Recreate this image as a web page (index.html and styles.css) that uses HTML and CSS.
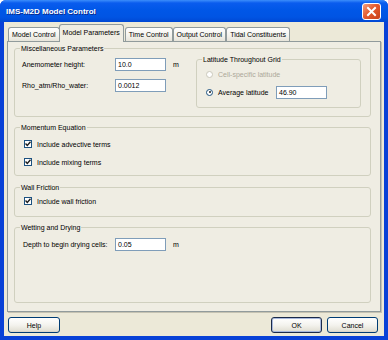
FILE: index.html
```html
<!DOCTYPE html>
<html lang="en">
<head>
    <meta charset="UTF-8">
    <title>IMS-M2D Model Control</title>
    <link rel="stylesheet" href="styles.css">
</head>
<body>
    <div class="window">
        <div class="titlebar">
            <span class="title">IMS-M2D Model Control</span>
            <span class="close">
                <svg width="11" height="11" viewBox="0 0 11 11"><path d="M2 2 L9 9 M9 2 L2 9" stroke="#fff" stroke-width="2" stroke-linecap="square"/></svg>
            </span>
        </div>
        <div class="client">
            <!-- tab strip -->
            <div class="tabs">
                <span class="tab">Model Control</span>
                <span class="tab active">Model Parameters</span>
                <span class="tab">Time Control</span>
                <span class="tab">Output Control</span>
                <span class="tab">Tidal Constituents</span>
            </div>
            <div class="panel">
                <div class="group misc">
                    <span class="group-title">Miscellaneous Parameters</span>
                    <div class="misc-body">
                        <div class="fields">
                            <div class="row">
                                <label>Anemometer height:</label>
                                <span class="input">10.0</span>
                                <span class="unit">m</span>
                            </div>
                            <div class="row">
                                <label>Rho_atm/Rho_water:</label>
                                <span class="input">0.0012</span>
                            </div>
                        </div>
                        <div class="group lat">
                            <span class="group-title">Latitude Throughout Grid</span>
                            <div class="radio-row disabled">
                                <span class="radio"></span>
                                <span>Cell-specific latitude</span>
                            </div>
                            <div class="radio-row">
                                <span class="radio checked"></span>
                                <span class="radio-label">Average latitude</span>
                                <span class="input">46.90</span>
                            </div>
                        </div>
                    </div>
                </div>

                <div class="group momentum">
                    <span class="group-title">Momentum Equation</span>
                    <div class="check-row">
                        <span class="check"><svg width="6" height="6" viewBox="0 0 6 6"><path d="M0.5 2.5 L2.3 4.5 L5.5 0.8" fill="none" stroke="#1d1d1d" stroke-width="1.4"/></svg></span>
                        <span>Include advective terms</span>
                    </div>
                    <div class="check-row">
                        <span class="check"><svg width="6" height="6" viewBox="0 0 6 6"><path d="M0.5 2.5 L2.3 4.5 L5.5 0.8" fill="none" stroke="#1d1d1d" stroke-width="1.4"/></svg></span>
                        <span>Include mixing terms</span>
                    </div>
                </div>

                <div class="group wall">
                    <span class="group-title">Wall Friction</span>
                    <div class="check-row">
                        <span class="check"><svg width="6" height="6" viewBox="0 0 6 6"><path d="M0.5 2.5 L2.3 4.5 L5.5 0.8" fill="none" stroke="#1d1d1d" stroke-width="1.4"/></svg></span>
                        <span>Include wall friction</span>
                    </div>
                </div>

                <div class="group wetting">
                    <span class="group-title">Wetting and Drying</span>
                    <div class="row">
                        <label>Depth to begin drying cells:</label>
                        <span class="input">0.05</span>
                        <span class="unit">m</span>
                    </div>
                </div>
            </div>
            <div class="buttons">
                <button class="btn help">Help</button>
                <span class="spacer"></span>
                <button class="btn default">OK</button>
                <button class="btn">Cancel</button>
            </div>
        </div>
    </div>
</body>
</html>
```

FILE: styles.css
```css
body { margin: 0; font-family: "Liberation Sans", Arial, sans-serif; font-size: 7px; color: #000; }

.window { width: 388px; height: 340px; display: flex; flex-direction: column; background: #0841D7; border-radius: 6px 6px 0 0; overflow: hidden; }

/* title bar */
.titlebar { height: 22px; flex: none; display: flex; align-items: center; padding: 0 7px 0 6px; background: linear-gradient(#3C8EFB 0, #0A5CEE 3px, #0057E7 10px, #0054E3 17px, #0048D3 22px); }
.title { color: #fff; font-weight: bold; font-size: 8px; text-shadow: 1px 1px 0 #0C2C8C; }
.close { margin-left: auto; width: 17px; height: 15px; border: 1px solid #fff; border-radius: 3px; display: flex; align-items: center; justify-content: center; background: linear-gradient(135deg, #F3A080 0, #E55B2E 45%, #C8401A 100%); }

.client { width: 380px; height: 314px; box-sizing: border-box; margin: 0 4px; background: #ECE9D8; display: flex; flex-direction: column; padding: 2px 3px 3px; }

/* tabs */
.tabs { display: flex; align-items: flex-end; height: 17px; margin-left: 1px; position: relative; z-index: 1; }
.tab { height: 14px; box-sizing: border-box; padding: 0 3px; display: flex; align-items: center; border: 1px solid #919B9C; border-bottom: none; border-radius: 3px 3px 0 0; background: linear-gradient(#FFFFFF, #F3F2EC 60%, #E6E4DA); white-space: nowrap; }
.tab.active { height: 18px; margin: 0 1px -1px -1px; padding: 0 3px 2px; background: #EFEDE3; position: relative; }

.panel { width: 374px; height: 271px; box-sizing: border-box; border: 1px solid #919B9C; background: #EFEDE3; padding: 2px 0 0 6px; box-shadow: 1px 1px 0 #C5C2B2; }

/* group boxes: the title sits on the top border */
.group { --pad: 7px; width: 357px; box-sizing: border-box; border: 1px solid #D0D0BF; border-radius: 3px; padding: 0 var(--pad); }
.group-title { display: block; width: max-content; margin: -5px 0 0 calc(5px - var(--pad)); padding: 0 1px; line-height: 9px; background: #EFEDE3; }

.misc { margin-top: 4px; padding-bottom: 8px; }
.misc-body { display: flex; align-items: flex-start; }
.fields { width: 174px; flex: none; padding-top: 5px; }
.row { display: flex; align-items: center; height: 13px; }
.row + .row { margin-top: 8px; }
.row label { width: 93px; flex: none; }
.input { width: 51px; height: 13px; box-sizing: border-box; flex: none; border: 1px solid #7F9DB9; background: #fff; padding: 0 2px; line-height: 11px; }
.unit { margin-left: 7px; }

.lat { --pad: 9px; width: 165px; flex: none; margin-top: 6px; padding-bottom: 9px; }
.radio-row { display: flex; align-items: center; height: 12px; }
.radio-row.disabled { color: #ACA899; margin-top: 4px; }
.radio-row + .radio-row { margin-top: 6px; }
.radio { width: 7px; height: 7px; border: 1px solid #1C5180; border-radius: 50%; background: #fff; margin-right: 5px; box-sizing: border-box; position: relative; }
.disabled .radio { border-color: #CAC8BB; }
.radio.checked::after { content: ""; position: absolute; left: 1.5px; top: 1.5px; width: 2px; height: 2px; border-radius: 50%; background: #1d1d1d; }
.radio-label { width: 58px; }

.check-row { display: flex; align-items: center; height: 12px; }
.check-row + .check-row { margin-top: 6px; }
.check { width: 8px; height: 8px; box-sizing: border-box; border: 1px solid #1C5180; background: #fff; margin-right: 5px; display: flex; align-items: center; justify-content: center; }

.momentum { --pad: 9px; margin-top: 10px; padding-bottom: 7px; }
.momentum .check-row:first-of-type { margin-top: 6px; }
.wall { --pad: 9px; margin-top: 11px; padding-bottom: 9px; }
.wall .check-row { margin-top: 3px; }

.wetting { --pad: 8px; margin-top: 10px; height: 76px; }
.wetting .row { margin-top: 6px; }
.wetting .row label { width: 92px; }

/* bottom buttons */
.buttons { display: flex; gap: 5px; margin-top: 5px; padding: 0 3px 0 1px; }
.spacer { flex: 1; }
.btn { width: 51px; height: 16px; box-sizing: border-box; border: 1px solid #003C74; border-radius: 3px; background: linear-gradient(#FFFFFF, #F4F3EE 50%, #E3E1D6 90%, #D6D0C5); font-family: inherit; font-size: 7px; padding: 0; color: #000; }
.btn.help { width: 52px; }
.btn.default { box-shadow: inset 0 0 0 1px #A8B8DC; border-color: #1A2A4A; }
```
